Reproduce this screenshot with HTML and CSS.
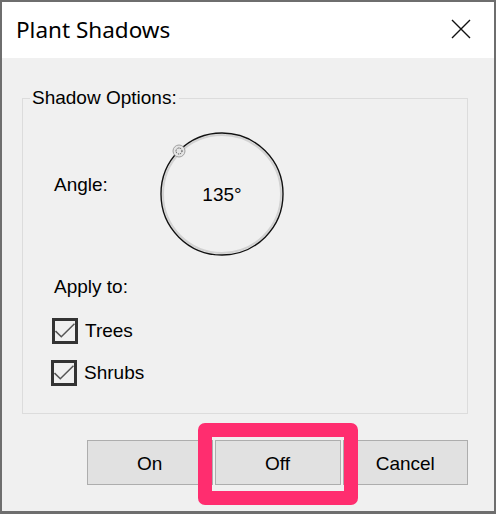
FILE: index.html
```html
<!DOCTYPE html>
<html lang="en">
<head>
    <meta charset="UTF-8">
    <title>Plant Shadows</title>
    <link rel="stylesheet" href="styles.css">
</head>
<body>

<div class="dialog">
    <div class="titlebar">
        <span class="title">Plant Shadows</span>
        <svg class="close" width="20" height="20" viewBox="0 0 20 20">
            <path d="M1 1 L19 19 M19 1 L1 19" stroke="#111" stroke-width="1.4" fill="none"/>
        </svg>
    </div>

    <div class="content">
        <fieldset class="group">
            <legend>Shadow Options:</legend>

            <div class="group-body">
                <div class="angle-row">
                    <span class="angle-label">Angle:</span>
                    <svg class="dial" width="124" height="124" viewBox="0 0 124 124">
                        <circle cx="62" cy="62" r="59" fill="none" stroke="#d2d2d2" stroke-width="2"/>
                        <circle cx="62" cy="62" r="61" fill="none" stroke="#111" stroke-width="1.4"/>
                        <circle cx="19" cy="19" r="6" fill="#e4e4e4" stroke="#a0a0a0" stroke-width="1"/>
                        <circle cx="19" cy="19" r="3" fill="none" stroke="#222" stroke-width="1" stroke-dasharray="1 1.2"/>
                        <text x="62" y="69" text-anchor="middle" class="dial-value">135°</text>
                    </svg>
                </div>

                <div class="apply-label">Apply to:</div>

                <label class="check">
                    <span class="box">
                        <svg width="20" height="20" viewBox="0 0 20 20">
                            <path d="M0.5 10 L6.3 15.7 L19.5 2.7" stroke="#555" stroke-width="1.6" fill="none"/>
                        </svg>
                    </span>
                    Trees
                </label>
                <label class="check">
                    <span class="box">
                        <svg width="20" height="20" viewBox="0 0 20 20">
                            <path d="M0.5 10 L6.3 15.7 L19.5 2.7" stroke="#555" stroke-width="1.6" fill="none"/>
                        </svg>
                    </span>
                    Shrubs
                </label>
            </div>
        </fieldset>

        <div class="buttons">
            <button class="btn">On</button>
            <span class="highlight"><button class="btn">Off</button></span>
            <button class="btn">Cancel</button>
        </div>
    </div>
</div>

</body>
</html>
```

FILE: styles.css
```css
body {
    margin: 0;
    background: #6e6e6e;
    font-family: "Liberation Sans", Arial, sans-serif;
    font-size: 19px;
    color: #000;
}
.dialog {
    margin: 2px;
    width: 492px;
    height: 509px;
    background: #f0f0f0;
}
.titlebar {
    height: 56px;
    background: #fff;
    display: flex;
    align-items: center;
    padding: 0 23px 0 14px;
}
.title {
    flex: 1;
    font-family: "Noto Sans", sans-serif;
    font-size: 22.5px;
    color: #000;
    margin-top: -1px;
}
.close {
    display: block;
    margin-top: -2px;
}
.content {
    padding: 0 26px 0 20px;
}
.group {
    margin: 29px 0 0 0;
    padding: 0;
    border: 1px solid #dcdcdc;
    min-width: 0;
}
.group legend {
    padding: 0 2px;
    margin-left: 7px;
    line-height: 22px;
}
.group-body {
    padding: 23px 0 27px 31px;
}
.angle-row {
    display: flex;
    align-items: flex-start;
}
.angle-label {
    width: 106px;
    margin-top: 42px;
    line-height: 22px;
}
.dial {
    display: block;
}
.dial-value {
    font-family: "Liberation Sans", Arial, sans-serif;
    font-size: 19px;
}
.apply-label {
    margin-top: 20px;
    line-height: 22px;
}
.check {
    display: flex;
    align-items: center;
    gap: 7px;
    margin-top: 20px;
    margin-left: -2px;
    line-height: 22px;
}
.check + .check {
    margin-top: 16px;
    margin-left: -3px;
}
.box {
    width: 20px;
    height: 20px;
    border: 3px solid #333;
    display: block;
}
.box svg {
    display: block;
}
.buttons {
    display: flex;
    gap: 2px;
    margin-top: 26px;
    padding-left: 65px;
}
.btn {
    width: 126px;
    height: 45px;
    background: #e1e1e1;
    border: 1px solid #adadad;
    font-family: "Liberation Sans", Arial, sans-serif;
    font-size: 19px;
    color: #000;
    padding: 2px 0 0;
    display: block;
}
.highlight {
    position: relative;
    display: block;
}
.highlight::after {
    content: "";
    position: absolute;
    top: -17px;
    left: -17px;
    right: -17px;
    bottom: -20px;
    border: 14px solid #ff2d6f;
    border-radius: 7px;
}
```
